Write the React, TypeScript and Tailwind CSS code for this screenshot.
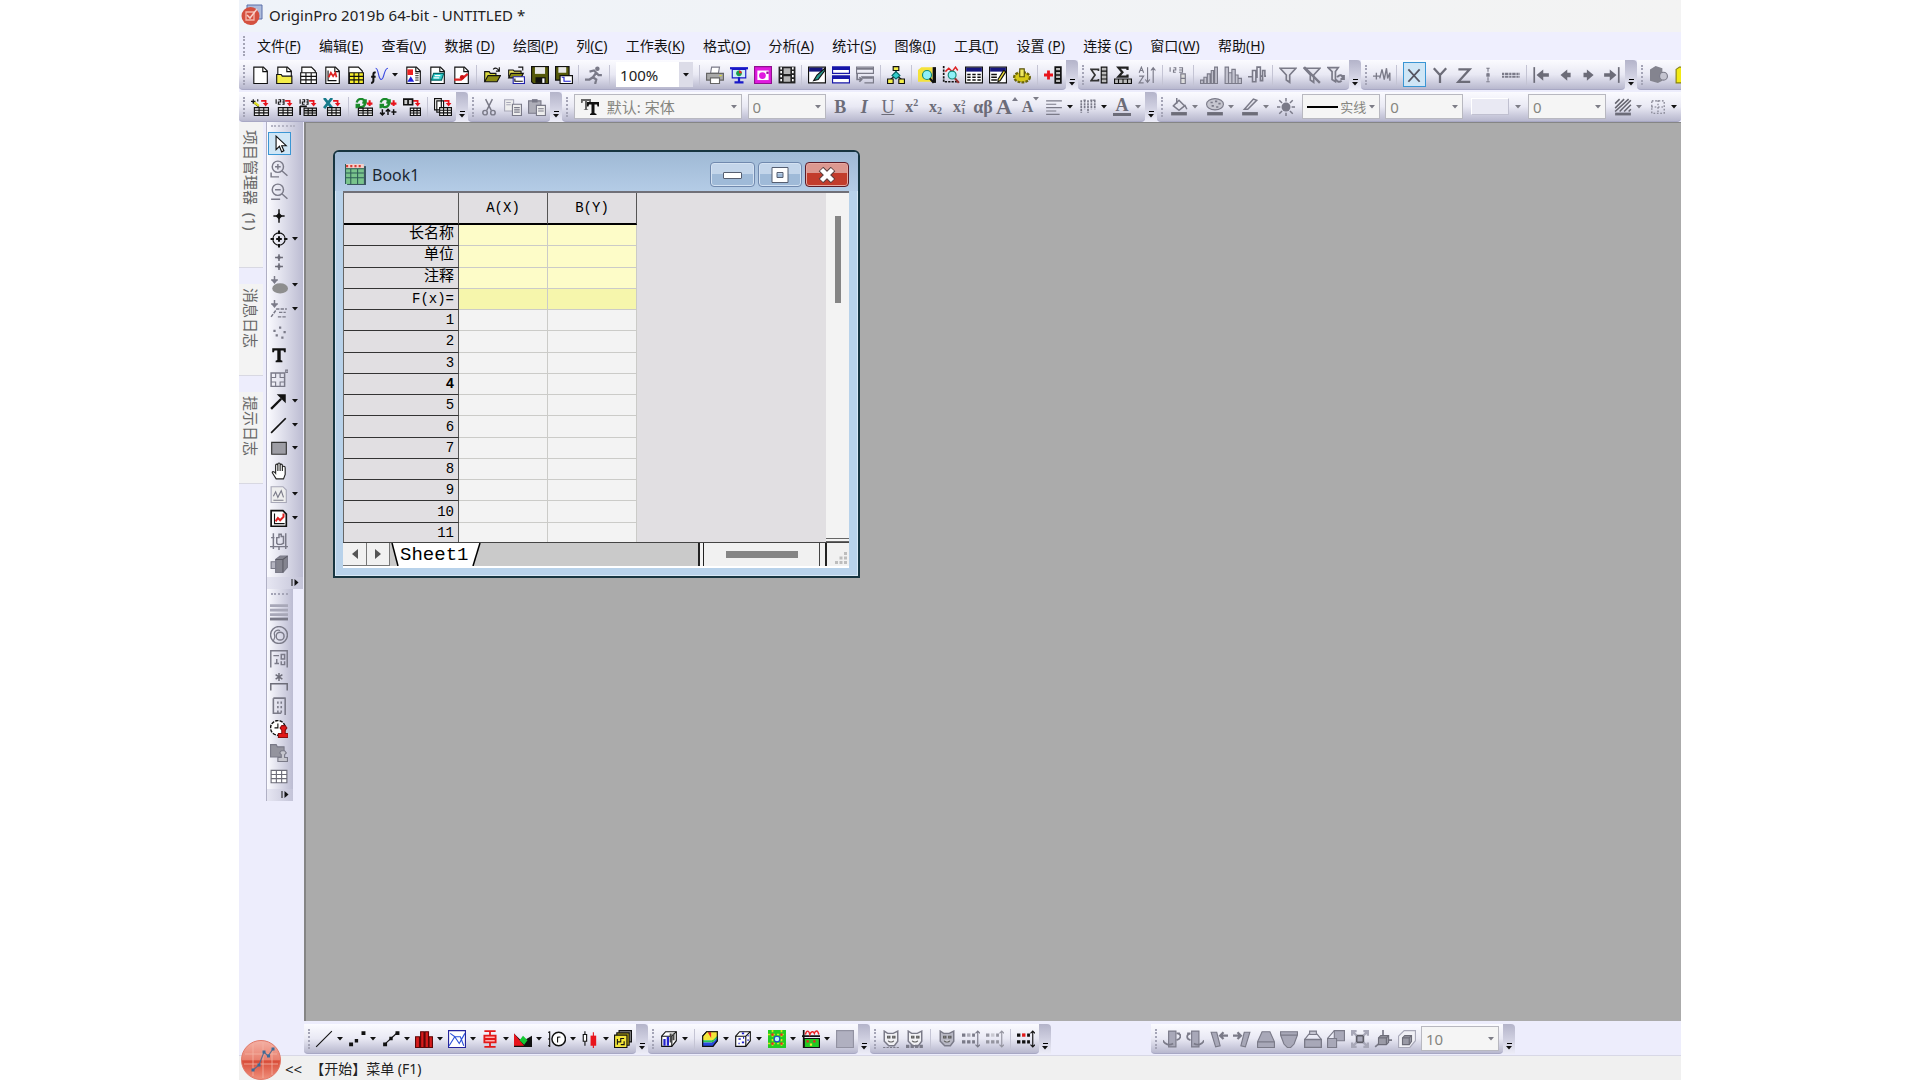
import React from 'react';

type Kids = { children?: React.ReactNode };

const G = '#7a7a88';
const L = '#a8a8b8';
const K = '#111111';

const page = <path d="M2.5 1h8.500l3.500 3.500v11h-12z" fill="#fff" stroke={K} />;
const fold = <path d="M10.500 1v4h4" fill="none" stroke={K} />;
const grid = (x: number, y: number, w: number, h: number, fill: string, stroke = K) => (
  <path d={`M${x} ${y}h${w}v${h}h${-w}zM${x} ${y + h / 3}h${w}M${x} ${y + (2 * h) / 3}h${w}M${x + w / 3} ${y}v${h}M${x + (2 * w) / 3} ${y}v${h}`} fill={fill} stroke={stroke} />
);
const redDown = (
  <>
    <path d="M9 2.500h4V5" fill="none" stroke="#e8141c" strokeWidth="1.500" />
    <path d="M10.500 4.500h5L13 7.500z" fill="#e8141c" />
  </>
);
const cube = (
  <>
    <path d="M1.500 5.500 5 1.500h9.500v8l-4 5h-9z" fill="#fff" stroke={K} />
    <path d="M1.500 5.500h9v9M10.500 5.500l4-4" fill="none" stroke={K} />
  </>
);
const nums = <path d="M1 1v4M3 1.500h2v2H3v2h2M6.500 1.500H8v4H6.500M6.500 3.500H8" fill="none" stroke={K} />;
const mask = (f: string) => (
  <>
    <path d="M2 1l3 2h5l4-2v9l-3 4H6l-4-4z" fill={f} stroke={G} strokeWidth="1.300" />
    <path d="M5 5.500h2v1.500H5zM9.500 5.500h2v1.500h-2zM5.500 9.500c1 1.500 4 1.500 5 0" fill="#fff" stroke="#555" />
  </>
);
const dots = (c: string, hot: string) => (
  <>
    <path d="M0 3h3v3H0zM0 9h3v3H0zM4.500 9h3v3h-3zM9 3h2.500v3H9zM9 9h2.500v3H9z" fill={c} />
    <path d="M4.500 3h3v3h-3z" fill={hot} />
    <path d="M14 1v14M12 3l2-2 2 2M12 13l2 2 2-2" stroke={c} fill="none" />
  </>
);

const icons: Record<string, React.ReactNode> = {
  newDoc: <>{page}{fold}</>,
  folder: <>{page}{fold}<path d="M1.500 7.500h4l1 1.500h8.500v6.500H1.500z" fill="#f4ee4a" stroke={K} /></>,
  book: <>{page}{grid(1.5, 6, 14, 9.5, '#fff')}</>,
  graph: <>{page}{fold}<path d="M4.500 4v9H12" stroke={K} fill="none" /><path d="M5 10l2-4 2 3 2-3 1 4" stroke="#d22" fill="none" strokeWidth="1.500" /></>,
  matrix: <>{page}{grid(3, 6, 12.5, 9.5, '#f7ee2c')}</>,
  fx: <><path d="M5 6C3 5 3 7 3 8v5c0 1-1 2-2 2M1 9.500h4" stroke={K} fill="none" strokeWidth="1.800" /><path d="M5 2c3 0 2 10 5 10s2-10 6-10" stroke="#3848e0" fill="none" /></>,
  layout: <>{page}{fold}<path d="M3 3h5v5H3z" fill="#e22" /><path d="M3 14l3-5 3 5z" fill="#22d" /><path d="M10 6.500h3M10 8.500h3M10 10.500h3M10 12.500h3" stroke="#555" /></>,
  notes: <>{page}{fold}<path d="M5 6.500h9l-2 6H3z" fill="#3cc" stroke="#066" /><path d="M6 8.500h5M5 10.500h5" stroke="#fff" /></>,
  linkDoc: <>{page}{fold}<path d="M2 12h6l6-5" stroke="#d22" strokeWidth="2" fill="none" /><circle cx="9" cy="10" r="2" fill="#c11" /></>,
  open: <><path d="M1.500 14v-9h4l1 1.500h5V8" fill="#d8d840" stroke={K} /><path d="M1.500 14l3-5.500h11L12.500 14z" fill="#8a8a14" stroke={K} /><path d="M9 3c2-2 4-1 5 1M14.500 1v3.500h-3" fill="none" stroke={K} /></>,
  openTpl: <><path d="M1.500 9.500v-6h4l1 1h6v2" fill="#e8e060" stroke={K} /><path d="M1.500 10.500l2-4h11l-2 4z" fill="#8a8a14" stroke={K} /><path d="M5.500 9.500h10v6h-10z" fill="#fff" stroke="#22a" /><path d="M10 1h4v3M7 11v2.500h7" fill="none" stroke={K} /></>,
  save: <><path d="M.5.500h15v15H2l-1.500-1.500z" fill="#55590a" stroke={K} /><path d="M3.500 1h9v6h-9z" fill="#e8e8e8" /><path d="M4 10h9v5H4z" fill={K} /><path d="M10 11h2v4h-2z" fill="#fff" /></>,
  saveTpl: <><path d="M.5.500h12v12H.5z" fill="#55590a" stroke={K} /><path d="M3 1h7v5H3z" fill="#e8e8e8" /><path d="M4.500 8.500h11v7h-11z" fill="#fff" stroke={K} /><path d="M6 10h2v3.500h6" fill="none" stroke="#22c" /></>,
  run: <><circle cx="11" cy="2.500" r="2" fill={G} /><path d="M4 5l4-1 2 2-3 4 3 2-1 4M7 10l-3 2H0M10 6l2 2h3" fill="none" stroke={G} strokeWidth="2" /></>,
  print: <><path d="M5 1h7l-1 5.500H4z" fill="#fff" stroke={G} /><path d="M.5 6.500h15v6H.5z" fill="#a9a9a9" stroke="#666" /><path d="M4 10.500h8v5H4z" fill="#fff" stroke="#666" /><path d="M12 8.500h2" stroke="#dd3" /></>,
  present: <><path d="M0 2h16" stroke="#1818c8" strokeWidth="2" /><path d="M2 3h12v7.500H2z" fill="#cfeef4" stroke="#1818c8" /><circle cx="8" cy="6.500" r="2.500" fill="#1a9c4c" /><path d="M8 6.500V4a2.500 2.500 0 0 1 2.500 2.500z" fill="#e22" /><path d="M8 10v4M4 14.500h8" stroke="#1818c8" strokeWidth="2" /></>,
  camera: <><path d="M.5.500h15v15H.5z" fill="#e01adf" stroke="#90108f" /><path d="M3 4h10v8.500H3z" fill="#fff" /><circle cx="7.500" cy="8.500" r="3" fill="#e01adf" /><path d="M11 5h2v2h-2z" fill="#90108f" /></>,
  film: <><path d="M.5.500h15v15H.5z" fill="#222" /><path d="M5 2h6v5H5zM5 9h6v5H5z" fill="#b5b5b5" /><path d="M2.800 1v14M13.200 1v14" stroke="#fff" strokeWidth="1.500" strokeDasharray="2 1.500" /></>,
  script: <><path d="M.5 1h15v14H.5z" fill="#fff" stroke={K} /><path d="M1 1.500h12v3.500H1z" fill="#16167c" /><path d="M15 2 8 8l-3 5 4-1 6-8z" fill="#2a9a8e" stroke={K} /></>,
  rows: <><path d="M.5 1h15v5.500H.5zM.5 9h15v6H.5z" fill="#fff" stroke="#1616a8" /><path d="M0 2h16M0 10h16" stroke="#1616a8" strokeWidth="3" /></>,
  rowsOff: <><path d="M.5 1h15v5.500H.5zM4.500 9.500h11v5.500h-8" fill="none" stroke={G} /><path d="M0 2.500h16M5 10.500h10M1 7v5h4M3 10l2 2-2 2" stroke={G} strokeWidth="1.500" fill="none" /></>,
  tree: <><path d="M8 4v5M3 12l5-4 5 4" stroke={K} fill="none" /><path d="M5.500.500h5v3.500h-5zM.5 11.500h5v4h-5zM10.500 11.500h5v4h-5z" fill="#f4ee4a" stroke={K} /><path d="M8 5 11.500 8.500 8 11.500 4.500 8.500z" fill="#3cc" stroke="#066" /></>,
  find: <><path d="M0 3.500 3 1h10v13H0z" fill="#f4e23a" /><path d="M13 1h3v14h-3z" fill="#111" /><circle cx="8" cy="8" r="4" fill="#8ff0f8" stroke="#187" /><path d="M10.500 11 14 15" stroke={K} strokeWidth="2" /></>,
  findGraph: <><path d="M1.500 0v14H15" stroke={K} fill="none" strokeWidth="1.500" strokeDasharray="2 1" /><path d="M3 5l3-3 3 3 3-4 2 3" stroke="#d22" fill="none" strokeWidth="1.300" /><circle cx="9" cy="8" r="3.500" fill="#8ff0f8" stroke="#187" /><path d="M11.500 11 15 15" stroke="#933" strokeWidth="2" /></>,
  table: <><path d="M.5 1h15v14H.5z" fill="#fff" stroke={K} /><path d="M1 1.500h14V5H1z" fill="#16167c" /><path d="M2 7.500h12M2 10h12M2 12.500h12" stroke={K} strokeWidth="1.300" strokeDasharray="3 1.500" /></>,
  tableEdit: <><path d="M.5 1h15v14H.5z" fill="#fff" stroke={K} /><path d="M1 1.500h14V5H1z" fill="#16167c" /><path d="M2 7.500h5M2 10h5M2 12.500h5" stroke={K} strokeWidth="1.300" /><path d="M13 4 8 12l0 2 2-1 5-8z" fill="#f4e23a" stroke={K} /></>,
  gear: <><ellipse cx="8" cy="10" rx="7" ry="4.500" fill="#d6c818" stroke="#6a640a" strokeDasharray="2.500 1" strokeWidth="2" /><path d="M6 2.500h4v7H6z" fill="#f0e860" stroke="#55500a" /></>,
  addCol: <><path d="M4 4v8M0 8h8" stroke="#e8141c" strokeWidth="2.500" /><path d="M10 1h5v14h-5zM10 4.500h5M10 8h5M10 11.500h5" fill="#bbb" stroke={K} strokeWidth="1.500" /></>,
  sumCol: <><path d="M7.500 4.500V3H1l3.500 5L1 13h6.500v-1.500" stroke="#333" fill="none" strokeWidth="1.500" /><path d="M10 1h5v14h-5zM10 4.500h5M10 8h5M10 11.500h5" fill="#bbb" stroke={K} /></>,
  sumRow: <><path d="M12 3.500V1.500H4L7.500 5.500l-3.500 4h8V7.500" stroke="#222" fill="none" strokeWidth="2" /><path d="M.5 11.500h15v4H.5zM4 11v4M8 11v4M12 11v4" fill="#bbb" stroke={K} /></>,
  sort: <><path d="M1 6l2-5 2 5M2 4h2M1 9h4l-4 6h4M8.500 1v14M6.500 12l2 2.500 2-2.500M13.500 15V1M11.500 4l2-2.500 2 2.500" stroke={G} fill="none" /></>,
  num123: <><path d="M1 1v4M4 1.500h2v2H4v2h2M9 1.500h3v4H9M9 3.500h3" stroke={G} fill="none" /><path d="M10.500 7h4v8.500h-4zM10.500 11h4" fill="#ddd" stroke={G} /></>,
  barsUp: <path d="M.5 12.500h2.500v3H.5zM3.500 10h2.500v5.500H3.500zM6.500 7h2.500v8.500H6.500zM10 4h2v11.500h-2zM13 1h2.500v14.500H13z" fill="#c4c4d0" stroke={G} />,
  bars: <path d="M1 1h3v14.500H1zM4 6h3v9.500H4zM7 3h3v12.500H7zM10 8h2.500v7.500H10zM12.500 11h3v4.500h-3z" fill="#c4c4d0" stroke={G} />,
  cols: <path d="M0 9.500h4V4h3v6h1V1h3v8h2V4h2v5h1M4 9v5h3V9M11 9v4h2V9" fill="none" stroke={G} strokeWidth="1.400" />,
  filter: <path d="M1 2h14L9.500 8v6.500l-3-2V8z" fill="#e4e4ee" stroke={G} strokeWidth="1.500" />,
  filterOff: <><path d="M1 2h14L9.500 8v6.500l-3-2V8z" fill="#e4e4ee" stroke={G} strokeWidth="1.500" /><path d="M1 1l14 14" stroke={G} strokeWidth="2" /></>,
  filterRe: <><path d="M1 1.500h9L7.500 5v9l-3-2V5z" fill="#e4e4ee" stroke={G} strokeWidth="1.500" /><path d="M9 10c2-3 5-2 5 1M15 8v3.500h-3M13 13c-2 2-4 1-5-1" fill="none" stroke={G} strokeWidth="1.800" /></>,
  wave: <path d="M0 9h6M3 6v6M6 11l2-8 2 9 2-10 1 9 2-5v7" fill="none" stroke={G} strokeWidth="1.200" />,
  X: <path d="M3 3l10 11M13 3 3 14" stroke="#555561" strokeWidth="1.600" fill="none" />,
  Y: <path d="M2.500 2 8 8l5.500-6M8 8v7" stroke="#6c6c78" strokeWidth="2" fill="none" />,
  Z: <path d="M3 3h10L3 14h10.500" stroke="#6c6c78" strokeWidth="2" fill="none" />,
  yerr: <><path d="M8 2v12M6.500 2h3M6.500 14h3" stroke={G} strokeDasharray="3 1" /><path d="M6.500 6.500h3v3h-3z" fill={G} /></>,
  none: <path d="M0 7h16M0 9.500h16" stroke={G} strokeWidth="1.800" strokeDasharray="2 .7 3 .7" />,
  first: <><path d="M2 1v14" stroke="#6c6c78" strokeWidth="1.500" /><path d="M4 8l6-5v3.500h5v3h-5V13z" fill="#6c6c78" /></>,
  prev: <path d="M4 8l6-5v3h3v4h-3v3z" fill="#6c6c78" />,
  next: <path d="M13 8 7 3v3H4v4h3v3z" fill="#6c6c78" />,
  last: <><path d="M14 1v14" stroke="#6c6c78" strokeWidth="1.500" /><path d="M12 8 6 3v3.500H1v3h5V13z" fill="#6c6c78" /></>,
  solid: <><path d="M0 3l5-3 6 2v11l-4 2-7-2z" fill="#84848f" /><circle cx="12" cy="9" r="3.500" fill="#c4c4d0" stroke={G} /></>,
  yellow: <path d="M1 3l3-2h9v12l-3 2H1z" fill="#f2ea16" stroke="#87820e" />,
  wand: <><path d="M1 3l7 6M2 1v4M0 3h4M6 1v2" stroke={K} fill="none" /><path d="M3 4l4 3" stroke="#dd2" strokeWidth="2" />{redDown}{grid(3, 8.5, 12.5, 7, '#eee')}</>,
  imp1: <>{nums}{redDown}{grid(3, 8.5, 12.5, 7, '#eee')}</>,
  imp2: <>{nums}{redDown}<path d="M1 7.500h6M1 7v8" stroke={K} strokeWidth="1.500" fill="none" />{grid(4.5, 9, 11, 6.5, '#ccc')}</>,
  excel: <><path d="M1 0l7 9M8 0 1 9" stroke="#167a8a" strokeWidth="2.500" />{redDown}{grid(4, 8.5, 11.5, 7, '#eee')}</>,
  reload: <><path d="M1.500 4c1-4 6-4 7-1M9 5c-1 4-6 4-7 1M6.500 4h3V1M4.500 6h-3v3" stroke="#1a8a2a" strokeWidth="2" fill="none" /><path d="M13 2v5M10.500 5h5" stroke="#e8141c" strokeWidth="1.800" />{grid(3, 9, 12.5, 6.5, '#eee')}</>,
  reload2: <><path d="M1.500 4c1-4 6-4 7-1M9 5c-1 4-6 4-7 1M6.500 4h3V1M4.500 6h-3v3" stroke="#1a8a2a" strokeWidth="2" fill="none" /><path d="M13 2v5M10.500 5h5" stroke="#e8141c" strokeWidth="1.800" /><path d="M3 10v5M1 13l2 2 2-2M8 15v-5M6 12l2-2 2 2M13 10v5M11 12.500h4.500" stroke={K} strokeWidth="1.300" fill="none" /></>,
  tblMove: <>{redDown}<path d="M.5 1h8v5h-8zM4.500 1v5" fill="#ccc" stroke={K} strokeWidth="1.500" />{grid(6.5, 9, 9, 6.5, '#eee')}</>,
  stack: <><path d="M.5.500h6v10h-6zM2.500 2.500h6v10h-6z" fill="#fff" stroke={K} />{redDown}{grid(5, 8.5, 10.5, 7, '#eee')}</>,
  cut: <><path d="M5 1l5 10M11 1 6 11" stroke={G} strokeWidth="1.300" /><circle cx="4.500" cy="13" r="2" stroke={G} strokeWidth="1.300" /><circle cx="11.500" cy="13" r="2" stroke={G} strokeWidth="1.300" /></>,
  copy: <><path d="M.5 1.500h8v10h-8zM2 4h4M2 6h4" fill="#eee" stroke={L} /><path d="M7.500 5.500h8v10h-8zM9 8.500h5M9 10.500h5M9 12.500h5" fill="#eee" stroke={G} /></>,
  paste: <><path d="M.5 2.500h11v11H.5z" fill="#aeaeb8" stroke={G} /><path d="M3.500 1h5v3h-5z" fill={G} /><path d="M7.500 6.500h8v9h-8zM9 9.500h5M9 11.500h5" fill="#eee" stroke={G} /></>,
  align: <path d="M1 2.500h14M1 5.500h9M1 8.500h14M1 11.500h9M1 14.500h12" stroke={G} />,
  vtext: <path d="M2 2v11M5 2v8M8 2v11M11 2v8M14 2v8M4 2h2M10 2h5" stroke={G} strokeWidth="1.500" strokeDasharray="2 .6" />,
  fill: <><path d="M3 7l5-5 5 5-5 4z" fill="#e4e4ee" stroke={G} strokeWidth="1.300" /><path d="M6 0v5M13 6l2 4" stroke={G} strokeWidth="1.300" /><path d="M1 12.500h14v3H1z" fill="#6c6c78" /></>,
  palette: <><ellipse cx="8" cy="5.500" rx="7.500" ry="5" fill="#c6c6cf" stroke={G} /><path d="M4 4h2M8 3h2M11 5h2M5 7h2M9 8h2" stroke={G} strokeWidth="1.500" /><path d="M1 12.500h14v3H1z" fill="#6c6c78" /></>,
  pen: <><path d="M3 10 11 1l3 1-8 8zM3 10h3" fill="#e4e4ee" stroke={G} strokeWidth="1.300" /><path d="M1 12.500h14v3H1z" fill="#6c6c78" /></>,
  sun: <><circle cx="8" cy="8" r="4" fill={G} /><path d="M8 0v3M8 13v3M0 8h3M13 8h3M2 2l2.500 2.500M11.500 11.500 14 14M14 2l-2.500 2.500M2 14l2.500-2.500" stroke={G} strokeWidth="1.300" /></>,
  hatch: <><path d="M1 5l4-4M1 9l8-8M1 12l12-11M5 12 15 2M9 12l6-6M13 12l2-2" stroke="#666670" strokeWidth="1.400" /><path d="M1 13h14v2.500H1z" fill="#6c6c78" /></>,
  border: <path d="M2.500 2.500h11v11h-11zM8 2v12M2 8h12" fill="none" stroke={G} strokeDasharray="1.500 1.500" />,
  pointer: <path d="M4.500 1v12l3-3 2 5 2-1-2-4.500h4z" fill="#fff" stroke={K} />,
  zoomIn: <><circle cx="7" cy="6" r="5" stroke={G} strokeWidth="1.300" /><path d="M10.500 9.500 15.500 14M4.500 6h5M7 3.500v5M1 11v4h7" stroke={G} strokeWidth="1.300" fill="none" /></>,
  zoomOut: <><circle cx="7" cy="6" r="5" stroke={G} strokeWidth="1.300" /><path d="M10.500 9.500 15.500 14M4.500 6h5M1 14.500h8" stroke={G} strokeWidth="1.300" fill="none" /></>,
  cross: <><path d="M8 2v12M3 8h10" stroke={K} strokeWidth="1.300" /><path d="M8 5l3 3-3 3-3-3z" fill={K} /></>,
  target: <><circle cx="8" cy="8" r="5.500" stroke={K} /><path d="M8 5.500v5M5.500 8h5M8 .500v3M8 12.500v3M.5 8h3M12.500 8h3" stroke={K} strokeWidth="1.800" /></>,
  twin: <><path d="M8 1v6M4.500 4h7M8 9v6M4.500 12h7" stroke="#6c6c78" strokeWidth="1.300" /><path d="M8 2l2 2-2 2-2-2zM8 10l2 2-2 2-2-2z" fill="#6c6c78" /></>,
  blob: <><ellipse cx="9" cy="11" rx="7" ry="4.500" fill="#8e8e8e" /><path d="M4 0v6M1 3.500h6M2 3.500 4 6l2-2.500" stroke={G} strokeWidth="1.300" /></>,
  curve: <><path d="M4 0v6M1 3.500h6M2 3.500 4 6l2-2.500" stroke={G} strokeWidth="1.300" /><path d="M1 15l5-7h9M8 11h6M7 15h8" stroke={G} strokeWidth="1.300" strokeDasharray="3 1" fill="none" /></>,
  scatter: <path d="M3 6h2v2H3zM8 3h2v2H8zM12 7h2v2h-2zM5 10h2v2H5zM10 12h2v2h-2z" fill={G} />,
  text: <path d="M2 2h12v3.500h-1.500L12 4H9.500v8.500L11 13v1.500H5V13l1.500-.5V4H4l-.5 1.500H2z" fill={K} />,
  region: <><path d="M1 3.500h12v12H1z" fill="none" stroke={G} strokeWidth="1.300" /><path d="M5 3.500v4H1M9 15.500v-4h4M9 3.500v4h4M1 11.500h4v4M14 1h2v2h-2z" stroke={G} fill="none" /></>,
  arrow: <><path d="M1 15 10 6" stroke={K} strokeWidth="2" /><path d="M6 2h8v8z" fill={K} /></>,
  line: <path d="M1 15 14 2" stroke={K} strokeWidth="1.500" />,
  rect: <path d="M1.500 3h13v10.500h-13z" fill="#9d9da4" stroke="#333" />,
  hand: <path d="M5.500 15 2 9.500c0-1.500 2-1 3 .5V3c0-1.500 2-1.500 2 0V2c0-1.500 2-1.500 2 0v1c0-1.500 2-1.500 2 0v1.500c0-1 2.500-1 2.500.5v6L12 15zM7 3v5M9 3v5M11 4v4" fill="#fff" stroke="#222" />,
  imgOff: <><path d="M1 1.500h10.500l3 3v11H1z" fill="#eee" stroke={L} /><path d="M3 10l2-4 2 5 3-6 2 6M3 13.500h9" stroke={G} fill="none" /></>,
  graphTool: <><path d="M1 1.500h10.500l3 3v11H1z" fill="#fff" stroke={K} strokeWidth="1.500" /><path d="M4 4v9h9" stroke={K} fill="none" /><path d="M5 11l2-3 2 2 3-3V4" stroke="#d22" fill="none" strokeWidth="1.800" /></>,
  handAxis: <path d="M3 1v14M0 13h16M6 10V5h2V2h2v2h2v6l-2 1H7zM14 1v14M8 13v3M1 5h3" fill="none" stroke={G} strokeWidth="1.300" />,
  box3: <><path d="M5 4l4-3h6.500v10l-4 4.500H5z" fill="#84848f" stroke={G} /><path d="M5 4h6.500v11.500M11.500 4l4-3" stroke="#5c5c66" fill="none" /><path d="M1 6h4v6H1z" fill="#b4b4c0" stroke={G} /></>,
  bands: <><path d="M0 1h16v2.500H0zM0 5h16v2.500H0zM0 9h16v2.500H0z" fill={L} /><path d="M0 13h16v2.500H0z" fill={G} /></>,
  rings: <><circle cx="8" cy="8" r="7.500" stroke={G} strokeWidth="1.300" /><circle cx="9" cy="9" r="3.500" stroke={G} strokeWidth="1.300" /><path d="M3 14c0-3 2-3 1-6s2-5 5-4" stroke={G} /></>,
  panel: <path d="M.7 15.500V.7h14.600v14.800M3 5h5M6 8v4M4 12h4M10 4h3v4h-3zM10 10v3h3v-3" fill="none" stroke={G} strokeWidth="1.300" />,
  star: <path d="M8 0v7M5 1.500l6 4M11 1.500l-6 4M.7 15.500V9.500h14.600v6" fill="none" stroke="#6c6c78" strokeWidth="1.300" />,
  ruler: <path d="M3 1h11M3 1v14M13.500 1v15M7 4v2M7 8v2M7 12v2M10 4v2M10 8v2M10 12v2M3 14.500h7" fill="none" stroke={G} strokeWidth="1.400" />,
  clock: <><circle cx="7" cy="7" r="6.500" fill="#fff" stroke={K} strokeWidth="1.300" strokeDasharray="3 1" /><path d="M7 3v4H4" stroke={K} fill="none" /><path d="M7.500 15.500V12h3V9L9 7l1.500-2h3L15 7l-1.500 2v3h2.500v3.500z" fill="#e21818" stroke="#8c1010" /></>,
  stamp: <><path d="M.5 11.500V.5h5l1 2h6v9z" fill="#94949e" stroke={G} /><path d="M7 15.500V12h3V9.500L8.500 8l1.500-2h3L14.500 8 13 9.500V12h2.500v3.500z" fill="#c6c6ce" stroke={G} /></>,
  grid: grid(1, 3, 14, 11, '#fff', '#6c6c78'),
  diag: <path d="M1 15 15 1" stroke={K} />,
  pts: <path d="M1 11h3.500v3.500H1zM6 8h3v3H6zM12 1h3.500v3.500H12z" fill={K} />,
  linePts: <><path d="M2 13 14 2" stroke={K} /><path d="M1 11h3.500v3.500H1zM6.500 6h3v3h-3zM12 1h3.500v3.500H12z" fill={K} /></>,
  colPlot: <path d="M.5 6h3.500v9.500H.5zM5 1.500h3v14H5zM9 1.500h3v14H9zM12.500 6h3v9.500h-3z" fill="#d81c1c" stroke="#5c0808" />,
  multi: <><path d="M.5.500h15v15H.5z" fill="#fff" stroke="#24249c" /><path d="M1 14 6 6l4 6 5-9M2 3l4 3h5l3 8" stroke="#2a50d8" fill="none" /></>,
  boxPlot: <path d="M3 1h10M8 1v4M3 5h10v6H3zM3 8h10M8 11v4M3 15h10" fill="#ffb0b0" stroke="#e21818" strokeWidth="1.600" />,
  area: <><path d="M0 15V3l5 5 3 2 3-2 5-3v10z" fill={K} /><path d="M0 14V3l5 6 4 5z" fill="#e8141c" /><path d="M5 9l3-4 4 4-3 4z" fill="#14c832" /></>,
  polar: <><path d="M1.500 1v14M0 2h2M0 8h2M0 14h2" stroke={K} /><circle cx="9.500" cy="8" r="6" fill="#fff" stroke={K} strokeWidth="1.300" /><path d="M8.500 11V6M8.500 7.500C9 6 10 6 11 6.500" stroke={K} fill="none" /></>,
  stock: <><path d="M3.500 1v3M3.500 10v4" stroke={K} /><path d="M2 4h3v6H2z" fill="#fff" stroke={K} /><path d="M11 2v14" stroke="#e8141c" /><path d="M8.500 5h5v9h-5z" fill="#e8141c" /></>,
  tplLib: <><path d="M4.500.500h11v10h-11z" fill="#888" stroke={K} /><path d="M2.500 2.500h11v11h-11z" fill="#b8a812" stroke={K} /><path d="M.5 4.500h11v11H.5z" fill="#f4e63a" stroke={K} /><path d="M3 13V8M3 10.500h3V7.500h3M6 13h3v-3" stroke={K} fill="none" /></>,
  cubeBars: <>{cube}<path d="M4 14V8M7 14V6" stroke="#22c" strokeWidth="2" /><path d="M9.500 11V3M12 9V3" stroke="#444" strokeWidth="1.800" /></>,
  surface: <>{cube}<path d="M1.500 6l4-4.500h9.500V5l-4 4H1.500z" fill="#f4e63a" /><path d="M6 2l3 5V2z" fill="#e22" /><path d="M1.500 9h9l4-4v2l-4 4h-9z" fill="#28c858" /><path d="M1.500 11h9l4-4v3l-4 5h-9z" fill="#2848e0" /><path d="M1.500 5.500 5 1.500h9.500v8l-4 5h-9z" stroke={K} /></>,
  cubePts: <>{cube}<path d="M4 8h2M7 11h2M4 12h1M8 7h1M12 5h1M12 9h1M7 3h2" stroke="#22c" strokeWidth="1.500" /></>,
  contour: <><path d="M0 0h16v16H0z" fill="#22cc22" /><path d="M0 4h16M0 12h16M4 0v16M12 0v16" stroke="#d8e61c" strokeWidth="1.500" strokeDasharray="2 2" /><circle cx="8" cy="8" r="2.500" fill="#b8f8f8" stroke="#24c" /><path d="M3 3h2v2H3zM11 3h2v2h-2zM3 11h2v2H3zM11 11h2v2h-2z" fill="#e22" /></>,
  profile: <><path d="M1.500 0v16M0 5.500h16" stroke={K} strokeWidth="1.500" /><path d="M3 4c1-4 3-4 4 0 1-3 3-3 4-1 1-3 3-3 4 1" stroke="#e22" strokeWidth="1.300" fill="none" /><path d="M2 7.500h13.500v8H2z" fill="#22cc22" stroke={K} /><path d="M4 9h2v2H4zM10 9h2v2h-2z" fill="#e22" /><path d="M7 12h2v2H7z" fill="#f4e63a" /></>,
  blank: <path d="M.5.500h15v15H.5z" fill="#b0b0c0" stroke="#9292a2" />,
  mask1: <>{mask('#f0f0f4')}<path d="M1 15.500h14" stroke={G} strokeDasharray="2 1" /></>,
  mask2: <>{mask('#f0f0f4')}<path d="M0 14.500h16" stroke={G} strokeWidth="3" strokeDasharray="3 1" /></>,
  mask3: mask('#b8b8c4'),
  dotsOff: dots(G, '#aaaab6'),
  dotsOff2: dots('#94949f', '#c8c8d0'),
  dotsOn: dots(K, '#e21818'),
  rotL: <><path d="M5 1h6.500v14H5z" fill={L} stroke={G} /><path d="M0 9c1 4 6 5 9 3M13 3c4 1 3 5-1 6M15 3h-3" stroke={G} fill="none" strokeWidth="1.500" /></>,
  rotR: <><path d="M5 1h6.500v14H5z" fill={L} stroke={G} /><path d="M16 9c-1 4-6 5-9 3M4 3C0 4 0 8 4 9M1 3h3" stroke={G} fill="none" strokeWidth="1.500" /></>,
  tiltL: <><path d="M1 2h5l3 12-4 1z" fill={L} stroke={G} /><path d="M16 5H9M12 2 9 5l3 3" stroke={G} fill="none" strokeWidth="2" /></>,
  tiltR: <><path d="M10 2h5l-4 13-4-1z" fill={L} stroke={G} /><path d="M0 5h7M4 2l3 3-3 3" stroke={G} fill="none" strokeWidth="2" /></>,
  trapUp: <path d="M4.500 1.500h7l4 9v5H.5v-5zM.5 10.500h15" fill={L} stroke={G} />,
  trapDn: <path d="M.5 1.500h15v3l-3 8-3 3h-3l-3-3-3-8zM.5 4.500h15" fill={L} stroke={G} />,
  persp: <><path d="M5 1h6v3H5z" fill="#c6c6d2" stroke={G} /><path d="M.5 8.500l4-5M15.500 8.500l-4-5" stroke={G} /><path d="M.5 8.500h15v7H.5z" fill={L} stroke={G} strokeWidth="1.300" /></>,
  overlap: <><path d="M6.500.500h9v9h-9z" fill={L} stroke={G} /><path d="M.5 7.500h8v8h-8z" fill={L} stroke={G} /><path d="M.5 7.500l6-7" stroke={G} /></>,
  fit: <><path d="M5 5h6v6H5z" fill={L} stroke="#5c5c66" strokeWidth="1.500" /><path d="M1 1l4 4M15 1l-4 4M1 15l4-4M15 15l-4-4M1 5V1h4M11 1h4v4M1 11v4h4M11 15h4v-4" stroke={L} strokeWidth="2" fill="none" /></>,
  axes: <><path d="M8 0v9M8 9h8M8 9l-7 6" stroke={G} strokeWidth="1.500" /><path d="M4 7l2-2h7v6l-2 2H4z" fill="#9a9aa6" stroke="#6c6c78" /><path d="M4 7h7v6M11 7l2-2" stroke="#6c6c78" /></>,
  cube2: <><path d="M.5 5.500l5-5h10v9l-5 6H.5z" fill="#f0f0f6" stroke={L} /><path d="M4 7l2-2h6v5l-2 3H4z" fill="#9a9aa6" stroke="#6c6c78" /><path d="M4 7h6v6M10 7l2-2" stroke="#6c6c78" /></>,
};

const Glyph = ({ n }: { n: string }) => (
  <svg viewBox="0 0 16 16" className="size-[18px] shrink-0" fill="none" aria-hidden="true">
    {icons[n]}
  </svg>
);

const Arrow = ({ dim }: { dim?: boolean }) => (
  <svg viewBox="0 0 6 4" className="h-1 w-1.5 shrink-0" aria-hidden="true">
    <path d="M0 0h6L3 3.500z" fill={dim ? '#7c7c86' : '#111'} />
  </svg>
);

const Btn = ({ n, drop, dim }: { n: string; drop?: boolean; dim?: boolean }) => (
  <button type="button" aria-label={n} className="flex shrink-0 items-center gap-1">
    <Glyph n={n} />
    {drop && <Arrow dim={dim} />}
  </button>
);

const TextBtn = ({ label, cls, children, drop, dim }: Kids & { label: string; cls?: string; drop?: boolean; dim?: boolean }) => (
  <button type="button" aria-label={label} className="flex shrink-0 items-center gap-1 text-[#6c6c78]">
    <span className={`flex w-[18px] justify-center font-['Liberation_Serif',serif] leading-5 ${cls ?? ''}`}>{children}</span>
    {drop && <Arrow dim={dim} />}
  </button>
);

const Sep = () => <span className="h-5 w-px shrink-0 bg-[#c4c4d4]" />;
const Grip = () => <span className="h-5 w-0.5 shrink-0 border-l-2 border-dotted border-[#a4a4b6]" />;

const Overflow = () => (
  <button type="button" aria-label="Toolbar options" className="flex w-3 shrink-0 flex-col items-center justify-end gap-0.5 self-stretch rounded-tr bg-gradient-to-b from-[#b4b4ca] via-[#cfcfe0] to-[#ededf8] pb-1">
    <span className="h-px w-[5px] bg-black" />
    <Arrow />
  </button>
);

const Bar = ({ label, cls, children, more = true }: Kids & { label: string; cls: string; more?: boolean }) => (
  <div role="toolbar" aria-label={label} className={`flex h-[30px] ${cls}`}>
    <div className="flex min-w-0 flex-1 items-center justify-between rounded-b-[4px] border-b border-[#a8a8c4] bg-gradient-to-b from-[#fbfbff] via-[#e9e9f4] to-[#b8b8ce] pr-1 pl-1">
      <Grip />
      {children}
    </div>
    {more && <Overflow />}
  </div>
);

const Combo = ({ label, value, cls, pad = 'pl-1 text-[15px]', children, white }: Kids & { label: string; value: string; cls: string; pad?: string; white?: boolean }) => (
  <span className={`relative flex h-[25px] shrink-0 items-center ${white ? 'bg-white' : 'border border-[#b8b8c0] bg-[#f5f5f5]'} ${cls}`}>
    {children}
    <select aria-label={label} className={`h-full w-full min-w-0 appearance-none bg-transparent leading-5 ${white ? 'text-[#222]' : 'text-[#85857f]'} ${pad}`}>
      <option>{value}</option>
    </select>
    <span className={`pointer-events-none absolute inset-y-0 right-0 flex items-center px-1 ${white ? 'bg-[#dcdce8]' : ''}`}>
      <Arrow dim={!white} />
    </span>
  </span>
);

const menus: [string, string][] = [
  ['文件', 'F'], ['编辑', 'E'], ['查看', 'V'], ['数据 ', 'D'], ['绘图', 'P'], ['列', 'C'], ['工作表', 'K'], ['格式', 'O'],
  ['分析', 'A'], ['统计', 'S'], ['图像', 'I'], ['工具', 'T'], ['设置 ', 'P'], ['连接 ', 'C'], ['窗口', 'W'], ['帮助', 'H'],
];

const sideTools: [string, boolean?][] = [
  ['pointer'], ['zoomIn'], ['zoomOut'], ['cross'], ['target', true], ['twin'], ['blob', true], ['curve', true], ['scatter'], ['text'],
  ['region'], ['arrow', true], ['line', true], ['rect', true], ['hand'], ['imgOff', true], ['graphTool', true], ['handAxis'], ['box3'],
];

const SideTab = ({ text, cls }: { text: string; cls: string }) => (
  <button type="button" className={`flex w-6 items-center border-b border-[#d8d8e2] bg-[#f3f3f3] text-[15px] leading-6 whitespace-pre text-[#666] [text-orientation:sideways] [writing-mode:vertical-rl] ${cls}`}>
    {text}
  </button>
);

const SideEnd = () => (
  <button type="button" aria-label="Toolbar options" className="flex h-3 w-full shrink-0 items-center justify-end bg-gradient-to-r from-[#e6e6f2] to-[#c4c4d8] pr-1">
    <svg viewBox="0 0 8 8" className="size-2" aria-hidden="true"><path d="M1 0v7" stroke={K} /><path d="M3.500 0v7l4-3.500z" fill={K} /></svg>
  </button>
);

const sheetRows = ['长名称', '单位', '注释', 'F(x)=', '1', '2', '3', '4', '5', '6', '7', '8', '9', '10', '11'];

const BookWindow = () => (
  <section aria-label="Book1" className="absolute top-[27px] left-[27px] flex h-[428px] w-[527px] flex-col rounded-t-md border-2 border-[#173540] bg-[#b8d2ea] pr-[9px] pb-2 pl-2 shadow-[inset_0_0_0_1px_#d8e8f6]">
    <header className="-mr-[9px] -ml-2 flex h-[39px] shrink-0 items-center gap-1.5 rounded-t bg-gradient-to-b from-[#9fb9d5] to-[#b4cce6] pt-1.5 pr-[9px] pl-2.5">
      <svg viewBox="0 0 20 20" className="size-[21px]" aria-hidden="true">
        <path d="M2 2h18v18H2z" fill="#3b5560" />
        <path d="M0 0h18v19H0z" fill="#79c48c" />
        <path d="M0 0h18v4H0z" fill="#f3d0cc" />
        <path d="M1 2h16" stroke="#d43c34" strokeWidth="2" strokeDasharray="2 2" />
        <path d="M0 4.500h18M0 8.500h18M0 13h18M5.500 4v15M12 4v15M.5 0v19" stroke="#2d5d56" />
      </svg>
      <h2 className="flex-1 font-['Noto_Sans',sans-serif] text-base text-[#1c2834]">Book1</h2>
      <div className="flex gap-[3px]">
        <button type="button" aria-label="Minimize" className="flex h-[25px] w-[45px] items-center justify-center rounded-sm border border-[#7089ae] bg-gradient-to-b from-[#c3d5ea] from-50% to-[#9fbad8] to-50% shadow-[inset_0_0_0_1px_#d4e2f2]">
          <span className="mt-0.5 h-[7px] w-[19px] rounded-[1px] border border-[#555e70] bg-white" />
        </button>
        <button type="button" aria-label="Maximize" className="flex h-[25px] w-11 items-center justify-center rounded-sm border border-[#7089ae] bg-gradient-to-b from-[#c3d5ea] from-50% to-[#9fbad8] to-50% shadow-[inset_0_0_0_1px_#d4e2f2]">
          <svg viewBox="0 0 18 16" className="h-4 w-[18px]" aria-hidden="true"><path d="M1 .500h16v15H1zM6 5.500h6v5H6z" fill="#fff" fillRule="evenodd" stroke="#555e70" /></svg>
        </button>
        <button type="button" aria-label="Close" className="flex h-[25px] w-11 items-center justify-center rounded-sm border border-[#5c1c28] bg-gradient-to-b from-[#dc9890] from-45% to-[#c23c2c] to-45% shadow-[inset_0_0_0_1px_#e6a8a0]">
          <svg viewBox="0 0 20 16" className="h-4 w-5" aria-hidden="true"><path d="M4 2l12 12M16 2 4 14" stroke="#5a4040" strokeWidth="6.500" /><path d="M4.500 2.500l11 11M15.500 2.500l-11 11" stroke="#fff" strokeWidth="4.500" /></svg>
        </button>
      </div>
    </header>
    <div className="flex min-h-0 flex-1 flex-col border-t-2 border-b-2 border-t-[#707078] border-b-white bg-[#e1dfe2]">
      <div className="flex min-h-0 flex-1 justify-between">
        <table className="h-[351px] w-[294px] table-fixed border-separate border-spacing-0 border-l border-[#666] font-['Liberation_Mono','Noto_Sans_CJK_SC',monospace] text-black">
          <thead>
            <tr className="h-8 text-sm">
              <th aria-label="Row" className="w-[115px] border-r border-b-2 border-r-[#555] border-b-black" />
              <th scope="col" className="border-r border-b-2 border-r-[#555] border-b-black font-normal">A(X)</th>
              <th scope="col" className="border-r border-b-2 border-r-[#555] border-b-black font-normal">B(Y)</th>
            </tr>
          </thead>
          <tbody>
            {sheetRows.map((r, i) => {
              const tone = i < 3 ? 'bg-[#fdfcc8]' : i === 3 ? 'bg-[#f6f6ac]' : 'bg-[#f3f3f3]';
              return (
                <tr key={r}>
                  <th scope="row" className={`border-r border-b border-r-[#555] border-b-[#333] py-0 pr-1 text-right leading-4 ${i < 3 ? 'text-[15px]' : 'text-sm'} ${r === '4' ? 'font-bold' : 'font-normal'}`}>{r}</th>
                  <td className={`border-r border-b border-[#cbcbc8] p-0 ${tone}`} />
                  <td className={`border-r border-b border-[#cbcbc8] p-0 ${tone}`} />
                </tr>
              );
            })}
          </tbody>
        </table>
        <div className="flex w-[23px] justify-center border-b-4 border-double border-[#666] bg-[#f3f3f3] pt-[23px]">
          <span className="h-[87px] w-1.5 bg-[#858585]" />
        </div>
      </div>
      <div className="flex h-6 shrink-0 border-t border-[#444] bg-[#cacaca]">
        <button type="button" aria-label="Previous sheet" className="flex w-6 items-center justify-center border-r border-b border-[#777] bg-[#f1f1f1]">
          <svg viewBox="0 0 6 10" className="h-2.5 w-1.5" aria-hidden="true"><path d="M6 0v10L0 5z" fill="#555" /></svg>
        </button>
        <button type="button" aria-label="Next sheet" className="flex w-[23px] items-center justify-center border-r border-b border-[#777] bg-[#f1f1f1]">
          <svg viewBox="0 0 6 10" className="h-2.5 w-1.5" aria-hidden="true"><path d="M0 0v10l6-5z" fill="#555" /></svg>
        </button>
        <button type="button" className="flex items-center font-['Liberation_Mono',monospace] text-[19px] leading-6 text-black">
          <svg viewBox="0 0 10 23" className="h-[23px] w-2.5" aria-hidden="true"><path d="M2 0h8v23H8z" fill="#fff" /><path d="M2 0l6 23" stroke="#000" strokeWidth="1.500" /></svg>
          <span className="h-full bg-white">Sheet1</span>
          <svg viewBox="0 0 13 23" className="h-[23px] w-[13px]" aria-hidden="true"><path d="M0 0h12L5 23H0z" fill="#fff" /><path d="M12 0 5 23" stroke="#000" strokeWidth="1.500" /></svg>
        </button>
        <span className="flex-1" />
        <span className="w-1.5 border-x border-l-2 border-[#222] bg-[#f3f3f3]" />
        <span className="flex w-[116px] items-center justify-center border-r border-[#444] bg-[#f1f1f1]">
          <span className="h-[7px] w-[72px] bg-[#858585]" />
        </span>
        <span className="w-[5px] bg-[#f1f1f1]" />
        <span className="flex w-6 items-end justify-end border-l-2 border-[#222] bg-[#f1f1f1] p-0.5">
          <svg viewBox="0 0 12 12" className="size-3" aria-hidden="true"><path d="M9 0h3v3H9zM9 4.500h3v3H9zM9 9h3v3H9zM4.500 4.500h3v3h-3zM4.500 9h3v3h-3zM0 9h3v3H0z" fill="#bdbdbd" /></svg>
        </span>
      </div>
    </div>
  </section>
);

export default function App() {
  return (
    <div className="min-h-screen bg-white px-[12.45%] font-['Noto_Sans','Noto_Sans_CJK_SC',sans-serif]">
      <div className="flex h-screen flex-col overflow-hidden bg-[#ededfc]">
        <header className="flex h-8 shrink-0 items-center gap-1.5 bg-gradient-to-r from-[#eff3f9] to-[#f3f3f3] pb-0.5 pl-0.5">
          <svg viewBox="0 0 22 22" className="size-[22px]" aria-hidden="true">
            <path d="M6 1h15v14H6z" fill="#aebcdc" stroke="#5a6ea8" />
            <circle cx="9.500" cy="12" r="9" fill="#d4503f" />
            <path d="M5 8h8v8H5z" fill="none" stroke="#f4b4a8" strokeWidth="1.300" />
            <path d="M6 11l3 3 7-9" fill="none" stroke="#f8d0c8" strokeWidth="1.500" />
          </svg>
          <h1 className="text-[15px] whitespace-pre text-[#222]">OriginPro 2019b 64-bit - UNTITLED *</h1>
        </header>

        <nav aria-label="Menu" className="flex h-7 shrink-0 items-center bg-[#efeffe] pl-1">
          <Grip />
          <div className="ml-3 flex w-[1008px] shrink-0 justify-between text-sm text-[#111]">
            {menus.map(([t, k]) => (
              <button type="button" key={t} className="whitespace-pre">
                {t}(<span className="underline underline-offset-2">{k}</span>)
              </button>
            ))}
          </div>
        </nav>

        <div className="flex shrink-0 overflow-hidden">
          <Bar label="Standard" cls="w-[839px] shrink-0">
            <Btn n="newDoc" /><Btn n="folder" /><Btn n="book" /><Btn n="graph" /><Btn n="matrix" /><Btn n="fx" drop />
            <Btn n="layout" /><Btn n="notes" /><Btn n="linkDoc" /><Sep />
            <Btn n="open" /><Btn n="openTpl" /><Btn n="save" /><Btn n="saveTpl" /><Sep /><Btn n="run" /><Sep />
            <Combo label="Zoom" value="100%" cls="w-[77px]" white />
            <Sep /><Btn n="print" /><Btn n="present" /><Btn n="camera" /><Btn n="film" /><Sep />
            <Btn n="script" /><Btn n="rows" /><Btn n="rowsOff" /><Sep /><Btn n="tree" /><Sep />
            <Btn n="find" /><Btn n="findGraph" /><Btn n="table" /><Btn n="tableEdit" /><Btn n="gear" /><Sep /><Btn n="addCol" />
          </Bar>
          <Bar label="Column" cls="w-[283px] shrink-0">
            <Btn n="sumCol" /><Btn n="sumRow" /><Btn n="sort" /><Sep /><Btn n="num123" /><Sep />
            <Btn n="barsUp" /><Btn n="bars" /><Btn n="cols" /><Sep /><Btn n="filter" /><Btn n="filterOff" /><Btn n="filterRe" />
          </Bar>
          <Bar label="Plot designation" cls="w-[276px] shrink-0">
            <Btn n="wave" /><Sep />
            <span className="flex h-[25px] w-[23px] items-center justify-center border border-[#3a96d4] bg-[#cfe6f6]"><Btn n="X" /></span>
            <Btn n="Y" /><Btn n="Z" /><Btn n="yerr" /><Btn n="none" /><Sep /><Btn n="first" /><Btn n="prev" /><Btn n="next" /><Btn n="last" />
          </Bar>
          <Bar label="Region" cls="w-[60px] shrink-0" more={false}>
            <Btn n="solid" /><Btn n="yellow" />
          </Bar>
        </div>

        <div className="flex shrink-0 overflow-hidden pt-0.5">
          <Bar label="Import" cls="w-[229px] shrink-0">
            <Btn n="wand" /><Btn n="imp1" /><Btn n="imp2" /><Btn n="excel" /><Sep /><Btn n="reload" /><Btn n="reload2" /><Btn n="tblMove" /><Sep /><Btn n="stack" />
          </Bar>
          <Bar label="Edit" cls="w-[94px] shrink-0">
            <Btn n="cut" /><Btn n="copy" /><Btn n="paste" />
          </Bar>
          <Bar label="Format" cls="w-[595px] shrink-0">
            <Combo label="Font" value="默认: 宋体" cls="w-[168px]" pad="pl-2 text-[15px]">
              <svg viewBox="0 0 18 18" className="ml-1.5 size-[18px] shrink-0" aria-hidden="true">
                <path d="M0 1h10v4H8.500L8 3H6v8l1.500 1H2.500L4 11V3H2L1.500 5H0z" fill="#666" />
                <path d="M6 4h12v4.500h-1.500L16 6.500h-2.500V15l2 1v1H9v-1l1.500-1V6.500H8L7.500 8.500H6z" fill="#111" />
              </svg>
            </Combo>
            <Combo label="Font size" value="0" cls="w-[78px]" />
            <TextBtn label="Bold" cls="text-lg font-bold">B</TextBtn>
            <TextBtn label="Italic" cls="text-lg font-bold italic">I</TextBtn>
            <TextBtn label="Underline" cls="text-lg underline">U</TextBtn>
            <TextBtn label="Superscript" cls="text-base font-bold">x<span className="text-[10px] leading-3">2</span></TextBtn>
            <TextBtn label="Subscript" cls="text-base font-bold">x<span className="self-end text-[10px] leading-3">2</span></TextBtn>
            <TextBtn label="Both scripts" cls="text-base font-bold">x<span className="flex flex-col justify-center text-[9px] leading-2"><span>2</span><span>1</span></span></TextBtn>
            <TextBtn label="Greek" cls="text-lg font-bold">αβ</TextBtn>
            <TextBtn label="Increase font" cls="text-[22px] font-bold">A<svg viewBox="0 0 6 4" className="h-1 w-1.5 shrink-0" aria-hidden="true"><path d="M0 4h6L3 0z" fill={G} /></svg></TextBtn>
            <TextBtn label="Decrease font" cls="text-base font-bold">A<Arrow dim /></TextBtn>
            <Btn n="align" drop /><Btn n="vtext" drop />
            <TextBtn label="Font color" cls="border-b-[3px] border-[#6c6c78] text-lg leading-[16px] font-bold" drop dim>A</TextBtn>
          </Bar>
          <Bar label="Style" cls="min-w-[518px] flex-1" more={false}>
            <Btn n="fill" drop dim /><Btn n="palette" drop dim /><Btn n="pen" drop dim /><Btn n="sun" />
            <span className="flex gap-[5px]">
              <Combo label="Line style" value="实线" cls="w-[78px]" pad="pl-0.5 text-[13px]">
                <span className="ml-1 h-0.5 w-[31px] shrink-0 bg-black" />
              </Combo>
              <Combo label="Line width" value="0" cls="w-[78px]" />
            </span>
            <button type="button" aria-label="Pattern color" className="flex items-center gap-1.5">
              <span className="h-[17px] w-[38px] border border-[#c0c0d0] border-t-white border-l-white bg-[#e9e9f3]" />
              <Arrow dim />
            </button>
            <Combo label="Pattern width" value="0" cls="w-[78px]" />
            <Btn n="hatch" drop dim /><Btn n="border" drop />
          </Bar>
        </div>

        <main className="flex min-h-0 flex-1">
          <aside className="flex w-[65px] shrink-0">
            <div className="flex flex-col gap-4">
              <SideTab text="项目管理器  (1)" cls="h-[146px] pt-2" />
              <SideTab text="消息日志" cls="h-[92px] pt-1" />
              <SideTab text="提示日志" cls="h-[92px] pt-1" />
            </div>
            <div className="ml-[3px] flex flex-col items-start">
              <div role="toolbar" aria-label="Tools" className="flex h-[467px] w-[37px] flex-col border-l border-[#b0b0c4] bg-gradient-to-r from-[#fbfbff] to-[#bcbcd2]">
                <span className="mt-[3px] ml-1 h-0.5 w-6 shrink-0 border-t-2 border-dotted border-[#b4b4c4]" />
                <div className="flex flex-1 flex-col justify-between pt-[5px] pb-1">
                  {sideTools.map(([n, d], i) => (
                    <span key={n} className={i === 0 ? 'ml-px flex h-[23px] w-[23px] items-center justify-center border border-[#3a96d4] bg-[#cfe6f6]' : 'ml-[3px] flex items-center'}>
                      <Btn n={n} drop={d} />
                    </span>
                  ))}
                </div>
                <SideEnd />
              </div>
              <div role="toolbar" aria-label="Graph" className="flex h-[212px] w-[27px] flex-col border-l border-[#b0b0c4] bg-gradient-to-r from-[#fbfbff] to-[#bcbcd2]">
                <span className="mt-1 ml-1 h-0.5 w-[17px] shrink-0 border-t-2 border-dotted border-[#a4a4b6]" />
                <div className="ml-[3px] flex flex-1 flex-col items-start justify-between pt-2 pb-1">
                  {['bands', 'rings', 'panel', 'star', 'ruler', 'clock', 'stamp', 'grid'].map((n) => <Btn key={n} n={n} />)}
                </div>
                <SideEnd />
              </div>
            </div>
          </aside>
          <div className="relative flex-1 overflow-hidden border-t border-l-2 border-[#858585] bg-[#ababab]">
            <BookWindow />
          </div>
        </main>

        <div className="flex shrink-0 overflow-hidden border-b border-[#d8d8e6] pt-[3px] pb-px pl-[65px]">
          <Bar label="2D graphs" cls="w-[344px] shrink-0">
            <Btn n="diag" drop /><Btn n="pts" drop /><Btn n="linePts" drop /><Btn n="colPlot" drop /><Btn n="multi" drop />
            <Btn n="boxPlot" drop /><Btn n="area" drop /><Btn n="polar" drop /><Btn n="stock" drop /><Btn n="tplLib" />
          </Bar>
          <Bar label="3D graphs" cls="w-[222px] shrink-0">
            <Btn n="cubeBars" drop /><Sep /><Btn n="surface" drop /><Btn n="cubePts" drop /><Btn n="contour" drop /><Btn n="profile" drop /><Btn n="blank" />
          </Bar>
          <Bar label="Mask" cls="w-[181px] shrink-0">
            <Btn n="mask1" /><Btn n="mask2" /><Sep /><Btn n="mask3" /><Btn n="dotsOff" /><Btn n="dotsOff2" /><Sep /><Btn n="dotsOn" />
          </Bar>
          <Bar label="3D rotation" cls="ml-[100px] w-[364px] shrink-0">
            <Btn n="rotL" /><Btn n="rotR" /><Btn n="tiltL" /><Btn n="tiltR" /><Btn n="trapUp" /><Btn n="trapDn" /><Btn n="persp" />
            <Btn n="overlap" /><Btn n="fit" /><Btn n="axes" /><Btn n="cube2" />
            <Combo label="Rotation angle" value="10" cls="w-[78px]" />
          </Bar>
        </div>

        <footer className="relative flex h-6 shrink-0 items-center gap-2 bg-[#f0f0f0] pt-0.5 pl-[46px] text-[#222]">
          <button type="button" aria-label="Start" className="absolute bottom-0 left-0.5">
            <svg viewBox="0 0 40 40" className="size-10" aria-hidden="true">
              <defs>
                <linearGradient id="orb" x1="0" y1="0" x2="0" y2="1">
                  <stop offset="0" stopColor="#f4b0a4" /><stop offset=".5" stopColor="#e8806e" /><stop offset=".52" stopColor="#d84c38" /><stop offset="1" stopColor="#f0907c" />
                </linearGradient>
              </defs>
              <circle cx="20" cy="20" r="19.500" fill="url(#orb)" stroke="#e07868" />
              <path d="M4 14h32M3 24h34M12 4v32M22 2v36M31 5v30" stroke="#f4b4a4" strokeWidth=".8" />
              <path d="M12 30l6-5 5-13 4 4 5-7" stroke="#5c6c8c" strokeWidth="1.200" fill="none" />
              <path d="M10.500 28.500h3v3h-3zM16.500 23.500h3v3h-3zM21.500 10.500h3v3h-3zM26 14.500h3v3h-3zM30.500 7.500h3v3h-3z" fill="#3c6a98" />
            </svg>
          </button>
          <span className="text-[15px] leading-5">&lt;&lt;</span>
          <span className="text-sm">【开始】菜单 (F1)</span>
        </footer>
      </div>
    </div>
  );
}
